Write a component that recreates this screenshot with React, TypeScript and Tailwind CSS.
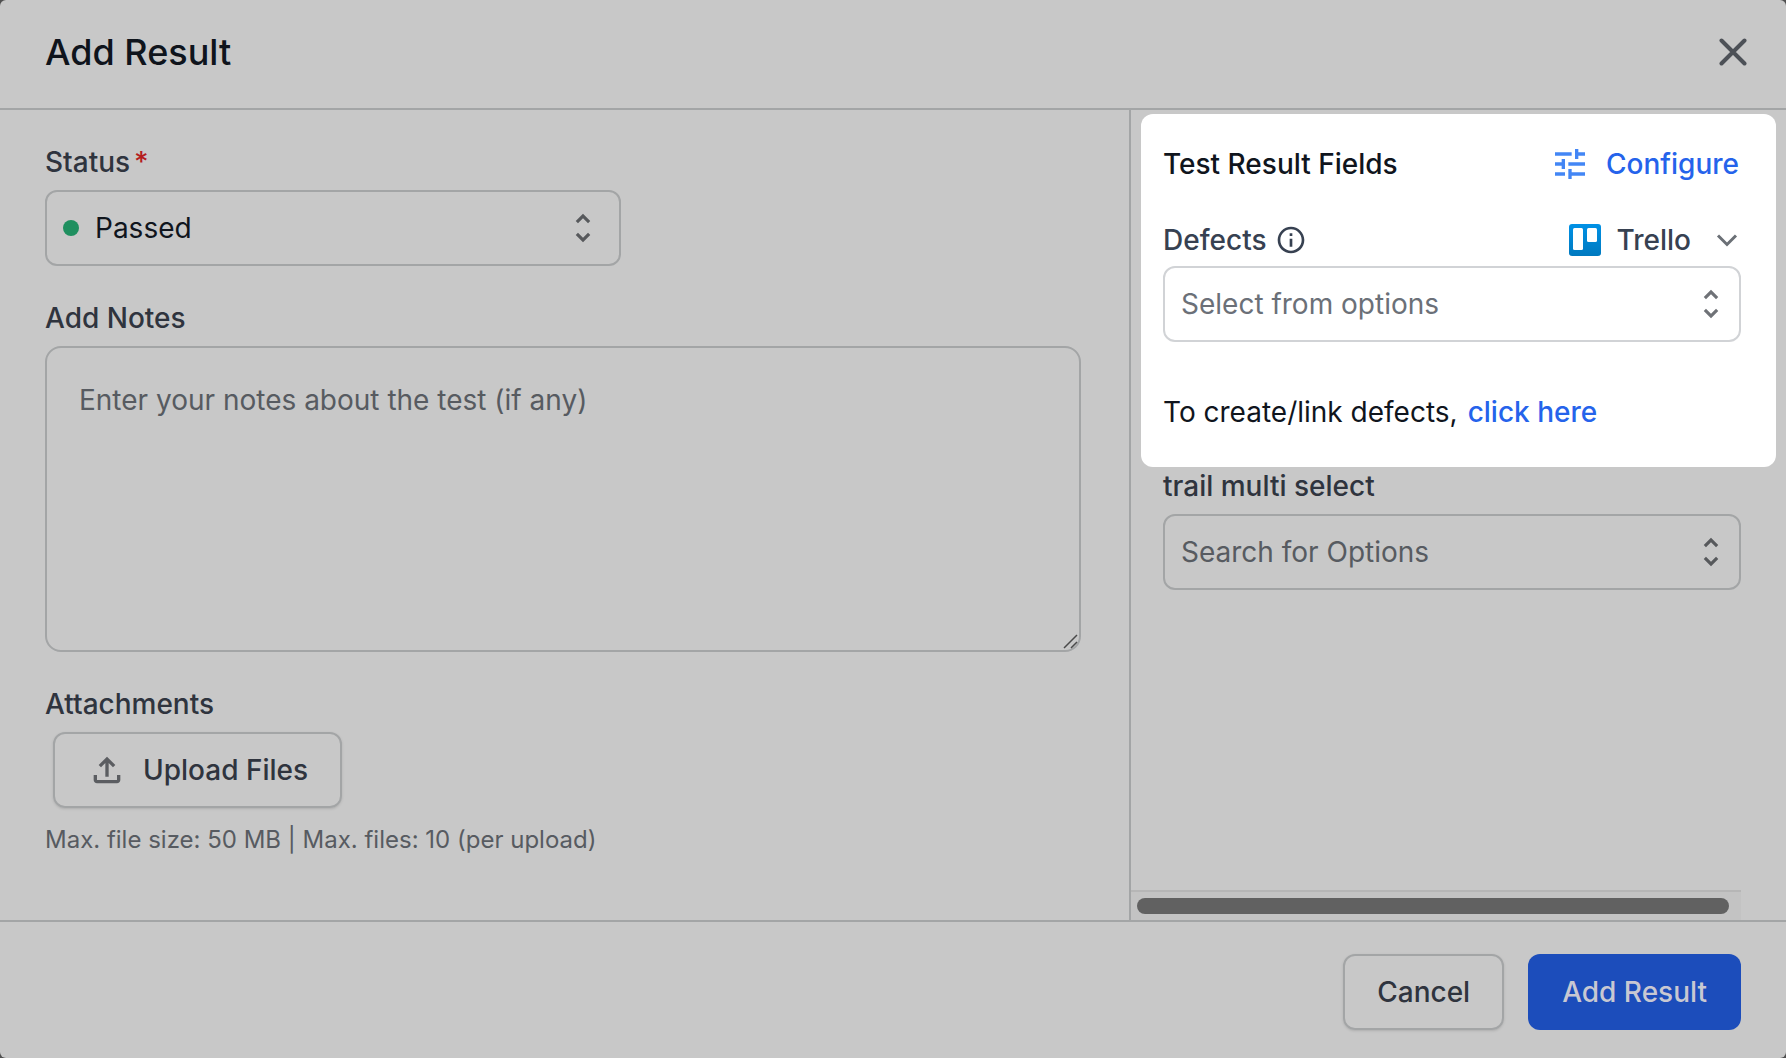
import React from "react";
import { MdTune, MdUnfoldMore, MdInfoOutline, MdOutlineFileUpload } from "react-icons/md";

type PickerProps = {
  id: string;
  value: string;
  tone: string;
  iconTone: string;
  dot?: boolean;
};

function Picker({ id, value, tone, iconTone, dot }: PickerProps) {
  return (
    <div className="relative">
      <select
        id={id}
        className={`h-[76px] w-full appearance-none rounded-xl border-2 bg-transparent pr-16 outline-none ${dot ? "pl-12" : "pl-4"} ${tone}`}
      >
        <option>{value}</option>
      </select>
      {dot && (
        <span className="pointer-events-none absolute inset-y-0 left-[18px] flex items-center">
          <span className="size-4 rounded-full bg-[#1f8f5f]" />
        </span>
      )}
      <span className={`pointer-events-none absolute inset-y-0 flex items-center ${dot ? "right-[19px]" : "right-[11px]"}`}>
        <MdUnfoldMore className={`size-[38px] ${iconTone}`} />
      </span>
    </div>
  );
}

function TrelloLogo() {
  return (
    <svg viewBox="0 0 32 32" className="size-8" aria-hidden="true">
      <defs>
        <linearGradient id="trello" x1="0" y1="0" x2="0" y2="1">
          <stop offset="0" stopColor="#0091e6" />
          <stop offset="1" stopColor="#0079bf" />
        </linearGradient>
      </defs>
      <rect width="32" height="32" rx="3" fill="url(#trello)" />
      <rect x="4" y="4" width="10" height="22" rx="1.5" fill="#fff" />
      <rect x="18" y="4" width="10" height="14" rx="1.5" fill="#fff" />
    </svg>
  );
}

export default function App() {
  return (
    <div className="min-h-screen bg-[#505050] font-['Inter',sans-serif] text-[28px] leading-10 text-[#2f343e]">
      <div
        role="dialog"
        aria-labelledby="dialog-title"
        className="flex min-h-screen flex-col rounded-md bg-[#c8c8c8]"
      >
        <header className="flex items-start justify-between border-b-2 border-[#a3a5a6] pt-8 pr-[33px] pb-9 pl-[45px]">
          <h1 id="dialog-title" className="text-4xl leading-10 font-medium text-[#0f141c]">
            Add Result
          </h1>
          <button aria-label="Close" className="flex size-10 items-center justify-center">
            <svg viewBox="0 0 28 28" className="size-7" fill="none" stroke="#4d5157" strokeWidth="4" strokeLinecap="round">
              <path d="M2.5 2.5l23 23M25.5 2.5l-23 23" />
            </svg>
          </button>
        </header>

        <main className="grid flex-1 grid-cols-[1129fr_657fr]">
          <form className="pt-8 pr-12 pl-[45px]">
            <label htmlFor="status" className="flex gap-1 font-medium">
              Status
              <span className="text-[#b51d1d]">*</span>
            </label>
            <div className="mt-2 w-[576px] max-w-full">
              <Picker id="status" value="Passed" tone="border-[#a3a5a6] text-[#10151d]" iconTone="text-[#57595c]" dot />
            </div>

            <label htmlFor="notes" className="mt-8 block font-medium">
              Add Notes
            </label>
            <div className="relative mt-2">
              <textarea
                id="notes"
                placeholder="Enter your notes about the test (if any)"
                className="block h-[306px] w-full resize-none rounded-2xl border-2 border-[#a3a5a6] bg-transparent px-8 py-8 placeholder-[#575b61] outline-none"
              />
              <svg
                viewBox="0 0 16 16"
                className="pointer-events-none absolute right-[2px] bottom-[3px] size-4"
                stroke="#4a4a4a"
                strokeWidth="1.5"
                aria-hidden="true"
              >
                <path d="M1 15L14 2M8 15l6-6" />
              </svg>
            </div>

            <div className="mt-8 font-medium">Attachments</div>
            <button
              type="button"
              className="mt-2 ml-2 flex h-[76px] items-center gap-4 rounded-xl border-2 border-[#a3a5a6] px-8 font-medium shadow-sm"
            >
              <MdOutlineFileUpload className="size-10 text-[#5b5d61]" />
              Upload Files
            </button>
            <p className="mt-4 text-2xl text-[#575b61]">
              Max. file size: 50 MB | Max. files: 10 (per upload)
            </p>
          </form>

          <aside className="flex flex-col border-l-2 border-[#a3a5a6]">
            <section className="mx-2.5 mt-1 rounded-xl bg-white pt-[30px] pr-[35px] pb-[35px] pl-[22px]">
              <div className="flex items-center justify-between pr-0.5">
                <h2 className="font-medium text-[#10151d]">Test Result Fields</h2>
                <button className="flex items-center gap-4 font-medium text-[#2563eb]">
                  <MdTune className="size-10 text-[#4386f5]" />
                  Configure
                </button>
              </div>
              <div className="mt-8 flex items-center justify-between">
                <label htmlFor="defects" className="flex items-center gap-2 font-medium text-[#374151]">
                  Defects
                  <MdInfoOutline className="size-8" />
                </label>
                <button className="flex h-12 items-center gap-4 font-medium text-[#374151]">
                  <TrelloLogo />
                  Trello
                  <svg viewBox="0 0 28 28" className="ml-1.5 size-7" fill="none" stroke="#6b7076" strokeWidth="3">
                    <path d="M5 9.5l9 9 9-9" />
                  </svg>
                </button>
              </div>
              <div className="mt-0.5">
                <Picker
                  id="defects"
                  value="Select from options"
                  tone="border-[#d1d3d6] text-[#6b7078]"
                  iconTone="text-[#6f7277]"
                />
              </div>
              <p className="mt-[50px] flex gap-2.5 text-[#10151d]">
                To create/link defects,
                <a href="#defects" className="font-medium text-[#2563eb]">
                  click here
                </a>
              </p>
            </section>

            <div className="mt-[3px] pr-[45px] pl-8">
              <label htmlFor="multi" className="block leading-8 font-medium">
                trail multi select
              </label>
              <div className="mt-3">
                <Picker
                  id="multi"
                  value="Search for Options"
                  tone="border-[#a3a5a6] text-[#575b61]"
                  iconTone="text-[#57595c]"
                />
              </div>
            </div>

            <div className="mt-auto mr-[45px] border-t-2 border-[#b6b6b6] bg-[#c3c3c3] pt-1.5 pr-3 pb-1.5 pl-1.5">
              <div className="h-4 rounded-full bg-[#616161]" />
            </div>
          </aside>
        </main>

        <footer className="flex justify-end gap-6 border-t-2 border-[#a3a5a6] pt-8 pr-[45px] pb-7">
          <button className="h-[76px] rounded-xl border-2 border-[#a3a5a6] px-8 font-medium shadow-sm">Cancel</button>
          <button className="h-[76px] rounded-xl bg-[#1c4dbb] px-[34px] font-medium text-[#c8c8d2]">Add Result</button>
        </footer>
      </div>
    </div>
  );
}
